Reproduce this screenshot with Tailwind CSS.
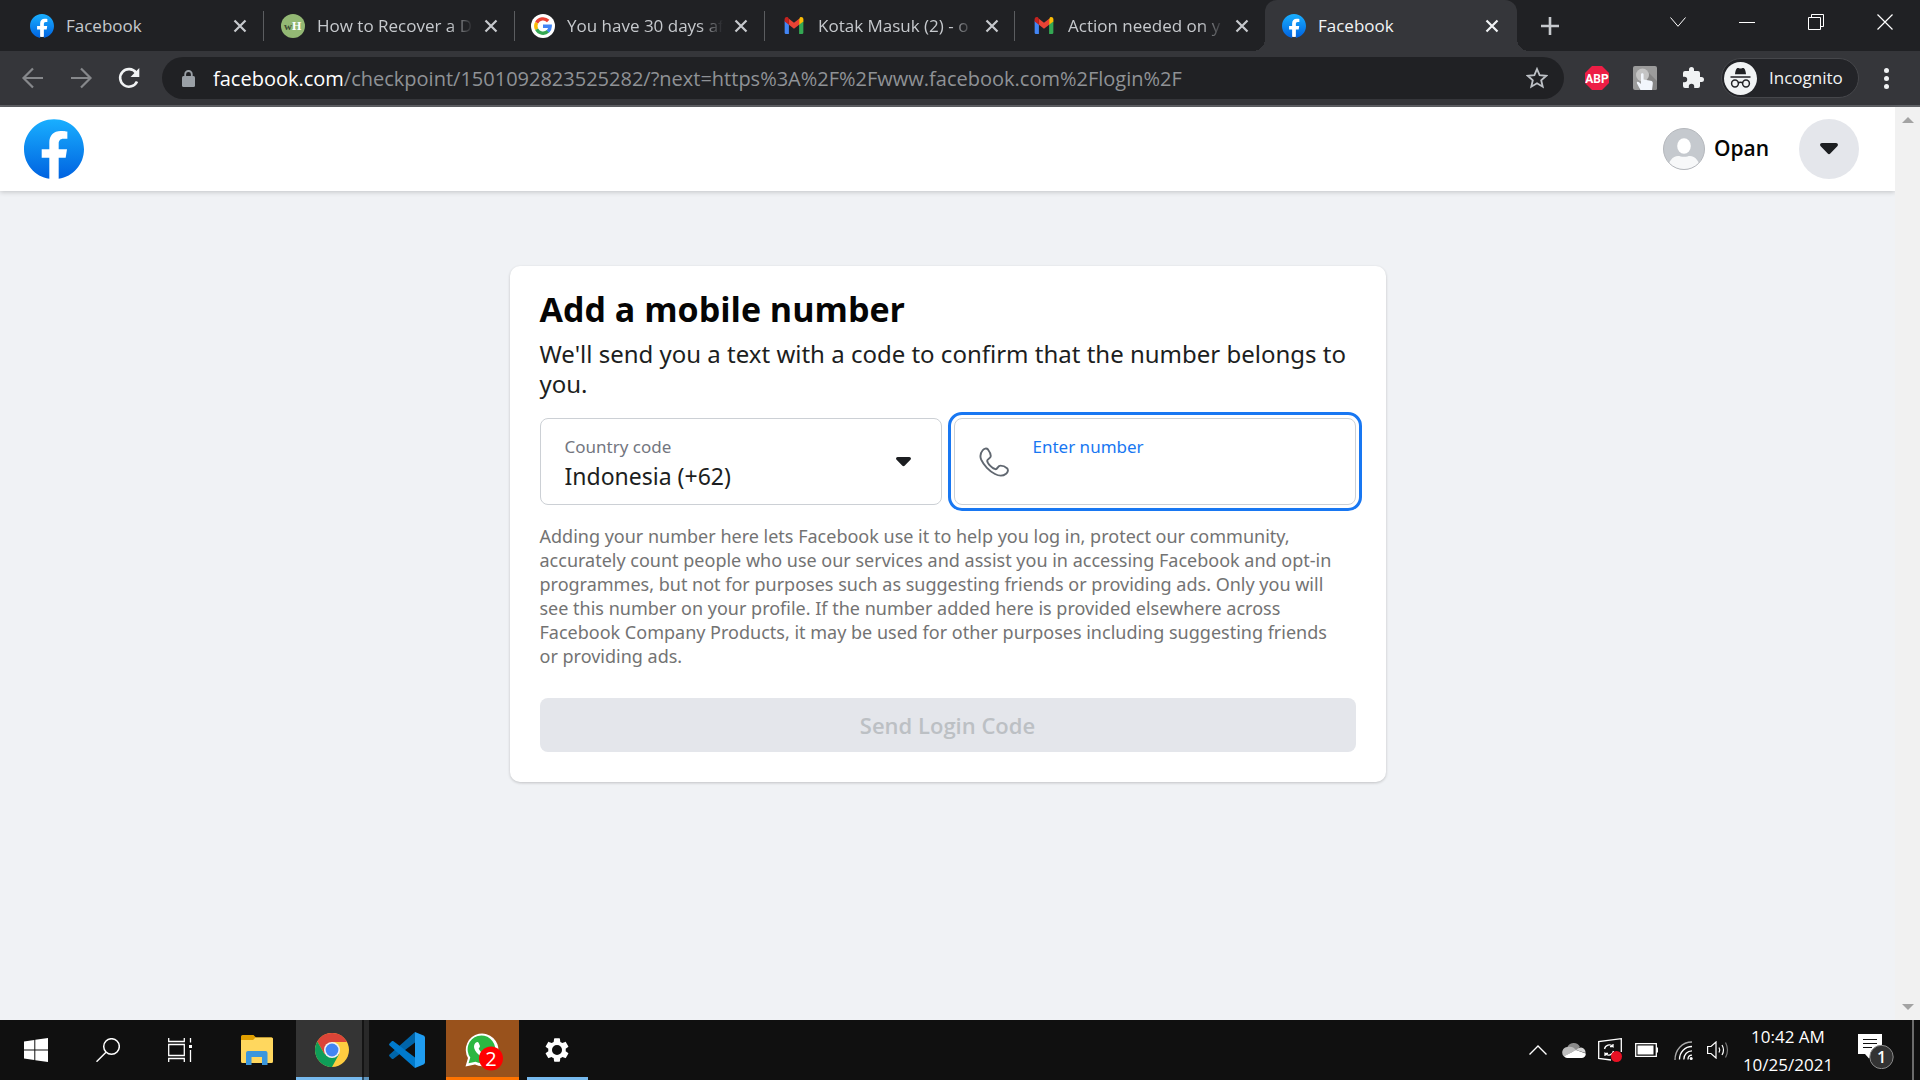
<!DOCTYPE html>
<html lang="en">
<head>
<meta charset="utf-8">
<title>Facebook</title>
<script src="https://cdn.jsdelivr.net/npm/@tailwindcss/browser@4"></script>
</head>
<body class="flex h-screen flex-col overflow-hidden bg-[#f0f2f5] font-['Open_Sans','Noto_Sans',sans-serif]">
<svg class="absolute size-0" aria-hidden="true">
  <defs>
    <linearGradient id="fbg" x1="0" y1="0" x2="0" y2="1"><stop offset="0" stop-color="#19afff"/><stop offset="1" stop-color="#0062e0"/></linearGradient>
  </defs>
  <symbol id="close" viewBox="0 0 14 14"><path d="M1.500 1.500l11 11M12.500 1.500l-11 11" stroke="currentColor" stroke-width="2.200" fill="none"/></symbol>
  <symbol id="fb" viewBox="0 0 24 24"><circle cx="12" cy="12" r="11" fill="#fff"/><path fill="url(#fbg)" d="M24 12.073c0-6.627-5.373-12-12-12s-12 5.373-12 12c0 5.990 4.388 10.954 10.125 11.854v-8.385H7.078v-3.470h3.047V9.430c0-3.007 1.792-4.669 4.533-4.669 1.312 0 2.686.235 2.686.235v2.953H15.830c-1.491 0-1.956.925-1.956 1.874v2.250h3.328l-.532 3.470h-2.796v8.385C19.612 23.027 24 18.062 24 12.073z"/></symbol>
  <symbol id="gmail" viewBox="0 0 22 20">
    <path d="M0 4v14.500A1.500 1.500 0 0 0 1.500 20H5V8.500z" fill="#4285f4"/>
    <path d="M22 4v14.500a1.500 1.500 0 0 1-1.500 1.500H17V8.500z" fill="#34a853"/>
    <path d="M17 2.500V9l5-3.800V2.500C22 .4 19.700-.7 18 .5z" fill="#fbbc04"/>
    <path d="M5 9V2.200l6 4.600 6-4.600V9l-6 4.700z" fill="#ea4335"/>
    <path d="M0 2.500v2.700L5 9V2L4 .5C2.300-.7 0 .4 0 2.500z" fill="#c5221f"/>
  </symbol>
  <symbol id="caret" viewBox="0 0 18 12"><path d="M2 0h14c1.800 0 2.600 2 1.300 3.300l-7 7.300c-.8.800-1.800.8-2.600 0l-7-7.300C-.6 2 .2 0 2 0z" fill="#1c1e21"/></symbol>
</svg>

<!-- Tab strip -->
<header class="shrink-0">
  <div class="flex h-[51px] items-stretch bg-[#202124] pl-[14px] text-[17px] text-[#c6c9cd]">
    <div class="flex w-[250px] items-center pl-4">
      <svg class="size-6 shrink-0"><use href="#fb"/></svg>
      <span class="ml-3 w-[156px] overflow-hidden whitespace-nowrap">Facebook</span>
      <button aria-label="Close tab" class="ml-[11px]"><svg class="size-[14px]"><use href="#close"/></svg></button>
      <span class="ml-auto h-[30px] w-px bg-[#5b5d60]"></span>
    </div>
    <div class="flex w-[251px] items-center pl-[17px]">
      <svg class="size-6 shrink-0" viewBox="0 0 24 24"><circle cx="12" cy="12" r="12" fill="#93b874"/><text x="3" y="16" font-size="11" font-weight="700" font-family="Liberation Serif" fill="#3c4a33">w</text><text x="11" y="16" font-size="12" font-weight="700" font-family="Liberation Serif" fill="#fff">H</text></svg>
      <span class="ml-3 w-[156px] overflow-hidden whitespace-nowrap mask-r-from-85%">How to Recover a D</span>
      <button aria-label="Close tab" class="ml-[11px]"><svg class="size-[14px]"><use href="#close"/></svg></button>
      <span class="ml-auto h-[30px] w-px bg-[#5b5d60]"></span>
    </div>
    <div class="flex w-[250px] items-center pl-4">
      <svg class="size-6 shrink-0" viewBox="0 0 24 24"><circle cx="12" cy="12" r="12" fill="#fff"/><g fill="none" stroke-width="3.400"><path d="M5.600 8.700A7.300 7.300 0 0 1 17.200 7" stroke="#ea4335"/><path d="M5.600 15.300a7.300 7.300 0 0 1 0-6.600" stroke="#fbbc05"/><path d="M17 17.300A7.300 7.300 0 0 1 5.600 15.300" stroke="#34a853"/><path d="M12 12.200h7.200a7.300 7.300 0 0 1-2.300 5.200" stroke="#4285f4"/></g></svg>
      <span class="ml-3 w-[156px] overflow-hidden whitespace-nowrap mask-r-from-85%">You have 30 days af</span>
      <button aria-label="Close tab" class="ml-[11px]"><svg class="size-[14px]"><use href="#close"/></svg></button>
      <span class="ml-auto h-[30px] w-px bg-[#5b5d60]"></span>
    </div>
    <div class="flex w-[250px] items-center pl-[17px]">
      <span class="flex w-6 shrink-0 justify-center"><svg class="h-[17px] w-[22px]" preserveAspectRatio="none"><use href="#gmail"/></svg></span>
      <span class="ml-3 w-[156px] overflow-hidden whitespace-nowrap mask-r-from-85%">Kotak Masuk (2) - o</span>
      <button aria-label="Close tab" class="ml-[11px]"><svg class="size-[14px]"><use href="#close"/></svg></button>
      <span class="ml-auto h-[30px] w-px bg-[#5b5d60]"></span>
    </div>
    <div class="flex w-[250px] items-center pl-[17px]">
      <span class="flex w-6 shrink-0 justify-center"><svg class="h-[17px] w-[22px]"><use href="#gmail"/></svg></span>
      <span class="ml-3 w-[156px] overflow-hidden whitespace-nowrap mask-r-from-85%">Action needed on y</span>
      <button aria-label="Close tab" class="ml-[11px]"><svg class="size-[14px]"><use href="#close"/></svg></button>
    </div>
    <div class="relative flex w-[252px] items-center rounded-t-xl bg-[#35363a] pl-[17px] text-[#f1f3f4]">
      <span class="absolute bottom-0 -left-3 size-3 bg-[radial-gradient(circle_at_0_0,#202124_12px,#35363a_12px)]"></span>
      <span class="absolute -right-3 bottom-0 size-3 bg-[radial-gradient(circle_at_100%_0,#202124_12px,#35363a_12px)]"></span>
      <svg class="size-6 shrink-0"><use href="#fb"/></svg>
      <span class="ml-3 w-[156px] overflow-hidden whitespace-nowrap">Facebook</span>
      <button aria-label="Close tab" class="ml-[11px]"><svg class="size-[14px]"><use href="#close"/></svg></button>
    </div>
    <button aria-label="New tab" class="ml-6"><svg class="size-[18px]" viewBox="0 0 18 18"><path d="M9 0v18M0 9h18" stroke="#c6c9cd" stroke-width="2.600"/></svg></button>
    <div class="ml-auto flex h-[43px] items-center pr-px text-white">
      <button aria-label="Search tabs" class="flex w-[68px] justify-center"><svg class="h-[10px] w-[16px]" viewBox="0 0 16 10"><path d="M.5.500 8 9.300 15.500.5" fill="none" stroke="currentColor"/></svg></button>
      <button aria-label="Minimize" class="flex w-[69px] justify-center"><svg class="size-4" viewBox="0 0 16 16"><path d="M0 8.500h16" stroke="currentColor"/></svg></button>
      <button aria-label="Restore" class="flex w-[69px] justify-center"><svg class="size-4" viewBox="0 0 16 16"><path d="M.5 3.500h12v12H.5zM3.500 3.500v-3h12v12h-3" fill="none" stroke="currentColor"/></svg></button>
      <button aria-label="Close" class="flex w-[69px] justify-center"><svg class="size-4" viewBox="0 0 16 16"><path d="M.5.500l15 15M15.500.500l-15 15" stroke="currentColor" stroke-width="1.200"/></svg></button>
    </div>
  </div>

  <!-- Toolbar -->
  <div class="flex h-14 items-center border-b-2 border-[#5f6165] bg-[#35363a]">
    <div class="flex w-[162px] shrink-0 items-center gap-6 pl-[21px] text-[#86888b]">
      <button aria-label="Back"><svg class="size-6" viewBox="0 0 24 24" fill="none" stroke="currentColor" stroke-width="2.200"><path d="M22 12H3.500M12 2.500 2.500 12l9.500 9.500"/></svg></button>
      <button aria-label="Forward"><svg class="size-6" viewBox="0 0 24 24" fill="none" stroke="currentColor" stroke-width="2.200"><path d="M2 12h18.500M12 2.500l9.500 9.500-9.500 9.500"/></svg></button>
      <button aria-label="Reload" class="text-[#f1f3f4]"><svg class="size-6" viewBox="0 0 24 24" fill="none"><path d="M20 15.500A8.800 8.800 0 1 1 19 6.600" stroke="currentColor" stroke-width="2.600"/><path d="M22.300 2v9H13.500z" fill="currentColor"/></svg></button>
    </div>
    <div class="flex h-[42px] min-w-0 flex-1 items-center rounded-full bg-[#202124] pr-4 pl-5">
      <svg class="h-[17px] w-[13px] shrink-0" viewBox="0 0 13 17"><rect y="6" width="13" height="11" rx="1.500" fill="#9aa0a6"/><path d="M3.200 7V4.300a3.300 3.300 0 0 1 6.600 0V7" fill="none" stroke="#9aa0a6" stroke-width="1.800"/></svg>
      <div class="ml-[18px] flex-1 truncate pt-px text-[20px] text-[#8f9296]"><span class="text-white">facebook.com</span>/checkpoint/1501092823525282/?next=https%3A%2F%2Fwww.facebook.com%2Flogin%2F</div>
      <button aria-label="Bookmark"><svg class="size-[22px]" viewBox="0 0 22 22"><path d="M11 2l2.600 6.200 6.600.6-5 4.400 1.500 6.500L11 16.200l-5.700 3.500 1.500-6.500-5-4.400 6.600-.6z" fill="none" stroke="#bdc1c6" stroke-width="1.800"/></svg></button>
    </div>
    <div class="ml-[21px] flex shrink-0 items-center gap-6">
      <button aria-label="Adblock Plus"><svg class="size-6" viewBox="0 0 24 24"><path d="M7 0h10l7 7v10l-7 7H7l-7-7V7z" fill="#ed1e45"/><text x="12" y="16.500" text-anchor="middle" font-size="12" font-weight="700" font-family="Roboto" fill="#fff">ABP</text></svg></button>
      <button aria-label="Click extension"><svg class="size-6" viewBox="0 0 24 24"><rect width="24" height="24" rx="2" fill="#9b9b9b"/><path d="M13 4l11 11v7a2 2 0 0 1-2 2H6z" fill="#858585"/><circle cx="9.500" cy="9" r="6.500" fill="#c4c4c4"/><path d="M8 8.500c0-1.800 2.600-1.800 2.600 0v5l7 1.200c1.800.3 2.400 1.300 2.200 3L19 24H7.500L4 17.500c-.8-1.600 1-2.300 2-1.200l2 1.700z" fill="#f2f6fc"/></svg></button>
      <button aria-label="Extensions"><svg class="size-6" viewBox="0 0 24 24"><path d="M20.500 11H19V7a2 2 0 0 0-2-2h-4V3.500a2.500 2.500 0 0 0-5 0V5H4a2 2 0 0 0-2 2v3.800h1.500a2.700 2.700 0 0 1 0 5.400H2V20a2 2 0 0 0 2 2h3.800v-1.500a2.700 2.700 0 0 1 5.400 0V22H17a2 2 0 0 0 2-2v-4h1.500a2.500 2.500 0 0 0 0-5z" fill="#f1f3f4"/></svg></button>
    </div>
    <div class="ml-4 flex h-10 w-[138px] shrink-0 items-center rounded-full border border-[#46474b] bg-[#232428] pl-[2px]">
      <svg class="size-[33px] shrink-0" viewBox="0 0 33 33"><circle cx="16.500" cy="16.500" r="16.500" fill="#f1f3f4"/><path d="M13 6.300c1.300-.6 2 .3 3.500.3s2.200-.9 3.500-.3c1.200.6 1.800 4 2 6H11c.2-2 .8-5.400 2-6z" fill="#202124"/><path d="M6.500 15h20M14 21c1.500-1 3.500-1 5 0" stroke="#202124" stroke-width="1.500" fill="none"/><circle cx="11" cy="21.500" r="3.400" fill="none" stroke="#202124" stroke-width="1.500"/><circle cx="22" cy="21.500" r="3.400" fill="none" stroke="#202124" stroke-width="1.500"/></svg>
      <span class="ml-3 text-[17px] text-[#f1f3f4]">Incognito</span>
    </div>
    <button aria-label="Menu" class="mr-[31px] ml-[25px] flex shrink-0 flex-col gap-[3px]"><i class="size-[5px] rounded-full bg-[#f1f3f4]"></i><i class="size-[5px] rounded-full bg-[#f1f3f4]"></i><i class="size-[5px] rounded-full bg-[#f1f3f4]"></i></button>
  </div>
</header>

<!-- Page -->
<div class="flex min-h-0 flex-1">
  <div class="min-w-0 flex-1">
    <div class="flex h-[84px] items-center bg-white pr-9 pl-6 shadow-[0_1px_5px_rgba(0,0,0,0.2)]">
      <a href="#" aria-label="Facebook"><svg class="size-[60px]"><use href="#fb"/></svg></a>
      <a href="#" class="ml-auto flex items-center gap-[9px] text-[21px] font-semibold text-[#050505]">
        <svg class="size-[42px]" viewBox="0 0 42 42"><clipPath id="av"><circle cx="21" cy="21" r="20.500"/></clipPath><g clip-path="url(#av)"><path fill="#c5c9ce" d="M0 0h42v42H0z"/><ellipse cx="21" cy="18" rx="6.800" ry="7.800" fill="#fff"/><path d="M5 42c0-9 5-14 10-14 2 0 3 .8 6 .8s4-.8 6-.8c5 0 10 5 10 14z" fill="#f7f8f9"/></g><circle cx="21" cy="21" r="20.500" fill="none" stroke="#b4b7bc"/></svg>
        <span class="w-[55px]">Opan</span></a>
      <button aria-label="Account" class="ml-[30px] flex size-[60px] items-center justify-center rounded-full bg-[#e4e6eb]"><svg class="h-[12px] w-[18px]"><use href="#caret"/></svg></button>
    </div>

    <main class="mx-auto mt-[75px] w-[876px] rounded-[10px] bg-white px-[30px] pt-5 pb-[30px] font-['Noto_Sans','Open_Sans',sans-serif] shadow-[0_1px_3px_rgba(0,0,0,0.2)]">
      <h1 class="font-['Open_Sans','Noto_Sans',sans-serif] text-[34px] leading-[46px] font-bold text-[#050505]">Add a mobile number</h1>
      <p class="mt-[7px] text-[24px] leading-[30px] text-[#1c1e21]">We'll send you a text with a code to confirm that the number belongs to you.</p>
      <form class="mt-[19px]">
        <div class="grid grid-cols-2 gap-3">
          <div class="flex h-[87px] min-w-0 items-center rounded-lg border border-[#ccd0d5] pr-[30px] pl-6">
            <div class="flex flex-1 flex-col">
              <label for="country" class="text-[17px] leading-7 text-[#737680]">Country code</label>
              <select id="country" class="h-[30px] w-full appearance-none text-[23px] leading-[30px] text-[#1c1e21]"><option>Indonesia (+62)</option></select>
            </div>
            <svg class="h-[10px] w-[15px]"><use href="#caret"/></svg>
          </div>
          <div class="flex h-[87px] min-w-0 items-center rounded-lg border border-[#ccd0d5] pr-6 pl-6 outline-3 outline-offset-3 outline-[#1877f2]">
            <svg class="size-[30px] shrink-0" viewBox="0 0 30 30"><path d="M3.500 3.500C5 1.500 7.500.8 9 2.500c1.500 2 2.800 4.500 2.800 6.500 0 2.500-3.600 3-3.600 4.800 0 2.500 5.500 8.400 8.500 8.400 2 0 2-3.600 4.800-3.600 2.500 0 5 1.200 6.500 2.600 1.600 1.600.9 4-.9 5.500-2.500 2-7 2.500-11.100.3C10.500 24.200 4.500 18 2.200 12.700.9 9.500 1.500 6 3.500 3.500z" fill="none" stroke="#606770" stroke-width="1.900"/></svg>
            <div class="ml-6 flex min-w-0 flex-1 flex-col">
              <label for="phone" class="text-[17px] leading-7 text-[#1877f2]">Enter number</label>
              <input id="phone" type="tel" class="h-[30px] w-full text-[23px] outline-none">
            </div>
          </div>
        </div>
        <p class="mt-[19px] text-[18px] leading-6 text-[#737373]">Adding your number here lets Facebook use it to help you log in, protect our community,<br>accurately count people who use our services and assist you in accessing Facebook and opt-in<br>programmes, but not for purposes such as suggesting friends or providing ads. Only you will<br>see this number on your profile. If the number added here is provided elsewhere across<br>Facebook Company Products, it may be used for other purposes including suggesting friends<br>or providing ads.</p>
        <button type="button" disabled class="mt-[30px] block h-[54px] w-full rounded-lg bg-[#e4e6eb] font-['Open_Sans','Noto_Sans',sans-serif] text-[22px] font-semibold text-[#bcc0c4]">Send Login Code</button>
      </form>
    </main>
  </div>
  <div class="flex w-[25px] shrink-0 flex-col items-center justify-between bg-[#f1f1f1] py-[10px]">
    <svg class="h-[6px] w-[12px]" viewBox="0 0 12 6"><path d="M0 6l6-6 6 6z" fill="#a3a3a3"/></svg>
    <svg class="h-[6px] w-[12px]" viewBox="0 0 12 6"><path d="M0 0l6 6 6-6z" fill="#a3a3a3"/></svg>
  </div>
</div>

<!-- Taskbar -->
<footer class="flex h-[60px] shrink-0 items-stretch bg-[#101010] text-white">
  <button aria-label="Start" class="flex w-[72px] items-center justify-center"><svg class="size-6" viewBox="0 0 24 24" fill="#fff"><path d="M0 3.400 10.300 2v9.500H0zM11.300 1.800 24 0v11.500H11.300zM0 12.500h10.300V22L0 20.600zM11.300 12.500H24V24l-12.700-1.800z"/></svg></button>
  <button aria-label="Search" class="flex w-[72px] items-center justify-center"><svg class="size-6" viewBox="0 0 24 24" fill="none" stroke="#fff" stroke-width="1.500"><circle cx="15.500" cy="8.500" r="7.800"/><path d="M10 14.200.5 23.700"/></svg></button>
  <button aria-label="Task View" class="flex w-[72px] items-center justify-center"><svg class="size-6" viewBox="0 0 24 24" fill="none" stroke="#fff" stroke-width="1.300"><path d="M.700 6.500h15.600v11H.700zM.700 0v3.500h15.600V0M.700 24v-3.500h15.600V24M22.500 0v4.500M22.500 12v12"/><path d="M21 7h3v3h-3z" fill="#fff" stroke="none"/></svg></button>
  <div class="ml-[5px] flex gap-[2px]">
    <button aria-label="File Explorer" class="flex w-[73px] items-center justify-center pr-[2px]"><svg class="h-[30px] w-8" viewBox="0 0 32 30"><path d="M0 1.500A1.500 1.500 0 0 1 1.500 0h11L15 2.500h15.500A1.500 1.500 0 0 1 32 4v6H0z" fill="#e09f00"/><path d="M0 5h12l2.500-2.500h16A1.500 1.500 0 0 1 32 4v22.500a1.500 1.500 0 0 1-1.500 1.500h-29A1.500 1.500 0 0 1 0 26.500z" fill="#ffd75e"/><path d="M5 30V18a2 2 0 0 1 2-2h17.500a2 2 0 0 1 2 2v12H21v-8H10.500v8z" fill="#3a96dd"/></svg></button>
    <button aria-label="Chrome" class="relative flex w-[73px] items-center justify-center border-b-3 border-[#76b9ed] bg-[#343434] pt-[3px] pr-[2px]"><span class="absolute -bottom-[3px] top-0 right-0 w-[7px] border-l-2 border-black/50 bg-black/20"></span>
      <svg class="size-[34px]" viewBox="0 0 34 34"><circle cx="17" cy="17" r="17" fill="#ffcd40"/><path d="M2.300 8.500 9.600 21.200 17 17V9h15A17 17 0 0 0 2.300 8.500z" fill="#db4437"/><path d="M2.300 8.500A17 17 0 0 0 17 34l7-12.700L17 17l-7.400 4.200z" fill="#0f9d58"/><circle cx="17" cy="17" r="8" fill="#f1f1f1"/><circle cx="17" cy="17" r="6.400" fill="#4285f4"/></svg></button>
    <button aria-label="Visual Studio Code" class="flex w-[73px] items-center justify-center pr-[2px]"><svg class="size-9" viewBox="0 0 36 36"><path d="M26 0v10.500L4.500 26.700c-.5.400-1.200.4-1.700 0L.6 24.600c-.7-.6-.7-1.600 0-2.200z" fill="#0065a9"/><path d="M26 36V25.500L4.500 9.300c-.5-.4-1.200-.4-1.700 0L.6 11.400c-.7.600-.7 1.600 0 2.200z" fill="#007acc"/><path d="M26 0l8.500 3.600c.9.400 1.500 1.200 1.500 2.200v24.400c0 1-.6 1.800-1.500 2.200L26 36z" fill="#1f9cf0"/></svg></button>
    <button aria-label="WhatsApp" class="flex w-[73px] items-center justify-center border-b-3 border-[#ff7300] bg-[#99521c] pt-[7px] pl-[3px]">
      <svg class="size-[38px]" viewBox="0 0 38 38"><path d="M.5 33.500 3 25A16.300 16.300 0 1 1 10 31.500z" fill="#fff"/><path d="M3.500 30.300 5.300 24.500A13.800 13.800 0 1 1 10.500 28.800z" fill="#2cb742"/><path d="M11 9.500c1-.9 2.300-.7 2.700.4l1.200 2.800c.4 1.200-1.200 2.300-1.200 3 1.200 2.700 3.500 4.600 6.300 5.600l2.500-1.500 4 2c.5 1.500-1.300 4-4.500 4-6-.2-13-7.500-13-12 0-2 .8-3.300 2-4.300z" fill="#fff"/><circle cx="26" cy="25.500" r="12" fill="#f00"/><text x="26" y="32.500" text-anchor="middle" font-size="20" font-family="Open Sans" fill="#fff">2</text></svg></button>
    <button aria-label="Settings" class="flex w-[73px] flex-col items-center justify-between"><svg class="mt-4 mr-[2px] size-7" viewBox="0 0 24 24"><path fill="#fff" fill-rule="evenodd" d="M19.430 12.980c.04-.32.070-.64.070-.98s-.03-.66-.07-.98l2.110-1.650c.19-.15.240-.42.120-.64l-2-3.460c-.12-.22-.39-.3-.61-.22l-2.490 1c-.52-.4-1.080-.73-1.690-.98l-.38-2.650C14.460 2.180 14.250 2 14 2h-4c-.25 0-.46.180-.49.420l-.38 2.650c-.61.250-1.170.590-1.690.980l-2.490-1c-.23-.09-.49 0-.61.220l-2 3.460c-.13.220-.07.490.12.640l2.110 1.650c-.04.320-.07.650-.07.980s.03.660.07.980l-2.110 1.650c-.19.150-.24.420-.12.640l2 3.460c.12.220.39.300.61.220l2.490-1c.52.400 1.080.730 1.690.980l.38 2.650c.03.240.24.420.49.420h4c.25 0 .46-.18.490-.42l.38-2.650c.61-.25 1.170-.59 1.690-.98l2.490 1c.23.090.49 0 .61-.22l2-3.460c.12-.22.070-.49-.12-.64zM12 16.300a4.300 4.300 0 1 1 0-8.600 4.300 4.300 0 0 1 0 8.600z"/></svg><span class="h-[3px] w-[61px] bg-[#76b9ed]"></span></button>
  </div>
  <div class="ml-auto flex items-center">
    <button aria-label="Show hidden icons"><svg class="h-[10px] w-[18px]" viewBox="0 0 18 10"><path d="M.5 9.500 9 1l8.500 8.500" fill="none" stroke="#fff" stroke-width="1.400"/></svg></button>
    <svg class="ml-[15px] h-4 w-6" viewBox="0 0 24 16"><path d="M5 6a7 7 0 0 1 13-1l-6 5z" fill="#8a8a8a"/><path d="M5.500 5A5.500 5.500 0 0 0 2 14.500L14 8C12 5 8.500 4 5.500 5z" fill="#bcbcbc"/><path d="M14 8a6 6 0 0 1 5-2.500A5 5 0 0 1 23.500 11z" fill="#d5d5d5"/><path d="M2 14.200 14 8l9.800 3.500A4.500 4.500 0 0 1 20 16H5a4.500 4.500 0 0 1-3-1.800z" fill="#fff"/></svg>
    <svg class="ml-3 size-6" viewBox="0 0 24 24" fill="none" stroke="#fff" stroke-width="1.300"><path d="M13 22 .7 20.500V3.500L23.300.7V14"/><path d="M6.500 11a5 5 0 0 1 8.500-2.500V6M15 8.700h-3M15.500 13A5 5 0 0 1 7 15.500V18M7 15.300h3"/><circle cx="18.500" cy="18.500" r="5.500" fill="#e81123" stroke="none"/></svg>
    <svg class="ml-[13px] h-[14px] w-[23px]" viewBox="0 0 23 14"><path d="M.7.700h20.600v12.600H.7z" fill="none" stroke="#fff" stroke-width="1.300"/><path d="M2.500 2.500h16v9h-16zM21.500 4.500H23v5h-1.500z" fill="#fff"/></svg>
    <svg class="ml-4 size-[19px]" viewBox="0 0 19 19" fill="none" stroke="#fff" stroke-width="1.300"><path d="M1 19C1 9 8 1 18 1" stroke="#aaa"/><path d="M5.500 18.500C5.500 11 11 5.500 18 5.500M9.800 18.500c0-5 3.700-8.700 8.200-8.700M14 18.500c0-2.500 1.500-4.400 4-4.400"/><circle cx="17.200" cy="17.500" r="1.500" fill="#fff" stroke="none"/></svg>
    <svg class="ml-[14px] h-[18px] w-[22px]" viewBox="0 0 22 18" fill="none" stroke="#fff" stroke-width="1.200"><path d="M.6 5.500H4L9 1v16l-5-4.500H.6z"/><path d="M12 6.500q1.500 2.500 0 5M15 4q3 5 0 10"/><path d="M18.500 1.500q4 7.500 0 15" stroke="#777"/></svg>
    <div class="ml-[13px] w-[92px] pt-px text-center text-[17px] leading-7"><div>10:42 AM</div><div>10/25/2021</div></div>
    <button aria-label="Notifications" class="ml-6"><svg class="h-[38px] w-9" viewBox="0 0 36 38"><path d="M0 3h24v20H15l-4 4.500L7 23H0z" fill="#fff"/><path d="M5 8.500h14M5 12.500h14M5 16.500h9" stroke="#101010" stroke-width="1.200"/><circle cx="23.500" cy="26" r="11.700" fill="#333" stroke="#8a8a8a"/><text x="23.500" y="32" text-anchor="middle" font-size="16" font-weight="600" font-family="Open Sans" fill="#fff">1</text></svg></button>
    <span class="mr-[6px] ml-[18px] h-[60px] w-[2px] bg-[#6b6b6b]"></span>
  </div>
</footer>
</body>
</html>
